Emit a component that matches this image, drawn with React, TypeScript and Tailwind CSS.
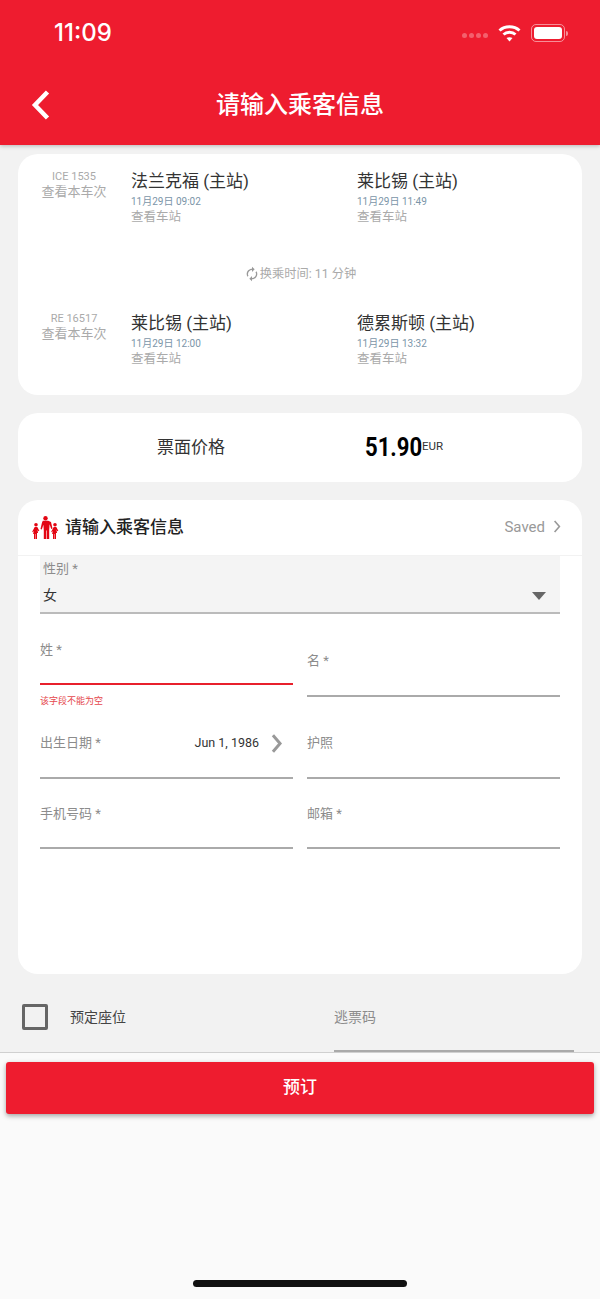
import { MdAutorenew } from 'react-icons/md';

const legs = [
  {
    train: 'ICE 1535',
    from: '法兰克福 (主站)',
    fromTime: '11月29日 09:02',
    to: '莱比锡 (主站)',
    toTime: '11月29日 11:49',
  },
  {
    train: 'RE 16517',
    from: '莱比锡 (主站)',
    fromTime: '11月29日 12:00',
    to: '德累斯顿 (主站)',
    toTime: '11月29日 13:32',
  },
];

function Stop({ name, time }: { name: string; time: string }) {
  return (
    <div className="flex flex-col">
      <span className="text-[17px] leading-[27px] text-[#333]">{name}</span>
      <span className="text-[10px] leading-[14px] text-[#7b95a8]">{time}</span>
      <span className="text-[12.5px] leading-[16px] text-[#aaa]">查看车站</span>
    </div>
  );
}

function Leg({ train, from, fromTime, to, toTime }: (typeof legs)[number]) {
  return (
    <div className="flex h-[56px]">
      <div className="w-[112px] pt-[2px] text-center flex flex-col shrink-0">
        <span className="text-[11px] leading-[14px] text-[#aaa]">{train}</span>
        <span className="text-[13px] leading-[16px] text-[#aaa]">查看本车次</span>
      </div>
      <div className="w-[226px] shrink-0 ml-[1px]">
        <Stop name={from} time={fromTime} />
      </div>
      <Stop name={to} time={toTime} />
    </div>
  );
}

function FamilyIcon() {
  const kid = 'M2.700 11h2.600l2 3.800-.9.5-1-1.500.7 3.200H5V23H3.700v-5h-.4v5H2v-5h-.9l.7-3.200-1 1.500-.6-.5z';
  return (
    <svg width="27" height="23" viewBox="0 0 27 23" fill="#e30613">
      <circle cx="13.500" cy="2.200" r="2.200" />
      <path d="M10.800 4.800h5.400l2.800 1.200 1.500 6.600-1.300.4-1.600-4.700-.4 5.700V23h-2.400v-8.500h-.6V23h-2.400v-8.500l-.4-5.700-1.600 4.700-1.300-.4 1.500-6.600z" />
      <circle cx="4" cy="8.800" r="1.800" />
      <path d={kid} />
      <circle cx="23" cy="8.800" r="1.800" />
      <path d={kid} transform="translate(19 0)" />
    </svg>
  );
}

function Chevron({ className, width, height, strokeWidth }: { className: string; width: number; height: number; strokeWidth: number }) {
  return (
    <svg width={width} height={height} viewBox="0 0 10 16" className={className} fill="none" stroke="currentColor" strokeWidth={strokeWidth}>
      <path d="M2 1l6 7-6 7" />
    </svg>
  );
}

function FieldLabel({ text }: { text: string }) {
  return <span className="block text-[13px] leading-[20px] text-[#8c8c8c]">{text}</span>;
}

export default function App() {
  return (
    <div className="w-[600px] h-[1299px] overflow-hidden flex flex-col bg-[#fafafa] font-['Roboto','Noto_Sans_CJK_SC',sans-serif]">
      <header className="relative z-10 h-[145px] shrink-0 bg-[#ee1c2f] text-white shadow-[0_1px_4px_rgba(0,0,0,0.25)] flex flex-col">
        <div className="flex items-center justify-between pl-[54px] pr-[32px] pt-[17px] h-[49px] shrink-0">
          <span className="font-['Inter'] text-[24px] leading-[30px] font-medium">11:09</span>
          <div className="flex items-center">
            <div className="flex gap-[2px] mr-[10px] mt-[5px]">
              {[0, 1, 2, 3].map((i) => (
                <span key={i} className="w-[5px] h-[5px] rounded-full bg-white/30" />
              ))}
            </div>
            <svg width="23" height="18" viewBox="0 0 23 18" fill="none" stroke="white" strokeWidth="3">
              <path d="M1.500 6.500c5.500-5 14.500-5 20 0" />
              <path d="M5.500 10.500c3.300-3 8.700-3 12 0" />
              <path d="M11.500 17.500l-3-3.400c1.700-1.300 4.300-1.300 6 0z" fill="white" stroke="none" />
            </svg>
            <div className="ml-[10px] flex items-center">
              <div className="w-[34px] h-[18px] rounded-[5px] border border-white/50 p-[2px]">
                <div className="w-full h-full rounded-[3px] bg-white" />
              </div>
              <span className="w-[2px] h-[5px] ml-[1px] rounded-r-full bg-white/50" />
            </div>
          </div>
        </div>
        <div className="relative flex-1 flex justify-center pt-[40px]">
          <svg width="20" height="30" viewBox="0 0 20 30" className="absolute left-[31px] top-[41px]" fill="none" stroke="white" strokeWidth="4.500">
            <path d="M16.500 2L4 15l12.500 13" />
          </svg>
          <h1 className="text-[24px] leading-[32px] font-medium">请输入乘客信息</h1>
        </div>
      </header>

      <main className="h-[908px] shrink-0 bg-[#f2f2f2] px-[18px] pt-[9px] flex flex-col border-b border-[#d0d0d0]">
        <section className="h-[241px] rounded-[20px] bg-white pt-[14px] shrink-0">
          <Leg {...legs[0]} />
          <div className="h-[86px] flex items-center justify-center pt-[14px] text-[12.25px] text-[#aaa]">
            <MdAutorenew size={16} className="text-[#999]" />
            <span>换乘时间: 11 分钟</span>
          </div>
          <Leg {...legs[1]} />
        </section>

        <section className="mt-[18px] h-[69px] rounded-[20px] bg-white flex items-center shrink-0">
          <span className="w-[346px] text-center text-[17px] text-[#333]">票面价格</span>
          <span className="w-[57px] ml-[1px] mb-[2px] text-[26px] leading-[32px] font-bold text-black whitespace-nowrap origin-left scale-x-[0.85]">51.90</span>
          <span className="text-[11.5px] text-[#333] mb-[2px]">EUR</span>
        </section>

        <section className="mt-[18px] h-[474px] rounded-[20px] bg-white shrink-0 overflow-hidden">
          <div className="h-[56px] border-b border-[#f2f2f2] flex items-center pl-[14px] pr-[21px]">
            <FamilyIcon />
            <span className="ml-[6px] text-[17px] font-medium text-[#222]">请输入乘客信息</span>
            <span className="ml-auto text-[15px] text-[#999]">Saved</span>
            <Chevron className="ml-[8px] text-[#999] mb-[2px]" width={8} height={13} strokeWidth={2} />
          </div>

          <div className="px-[22px]">
            <div className="relative h-[58px] bg-[#f4f4f4] border-b-2 border-[#bbb] px-[3px] pt-[3px] flex flex-col">
              <FieldLabel text="性别 *" />
              <span className="mt-[6px] text-[14px] leading-[20px] text-[#333]">女</span>
              <span className="absolute right-[14px] top-[36px] border-x-[7px] border-t-[8px] border-x-transparent border-t-[#666]" />
            </div>

            <div className="grid grid-cols-2 gap-x-[14px]">
              <div className="pt-[26px]">
                <div className="h-[45px] border-b-2 border-[#e8202c]">
                  <FieldLabel text="姓 *" />
                </div>
                <p className="mt-[10px] text-[9px] leading-[12px] text-[#e5484d]">该字段不能为空</p>
              </div>
              <div className="pt-[37px]">
                <div className="h-[46px] border-b-2 border-[#aaa]">
                  <FieldLabel text="名 *" />
                </div>
              </div>

              <div className="pt-[26px]">
                <div className="h-[46px] border-b-2 border-[#aaa] flex justify-between">
                  <FieldLabel text="出生日期 *" />
                  <div className="flex items-start pr-[10px]">
                    <span className="text-[12.5px] leading-[20px] text-[#333]">Jun 1, 1986</span>
                    <Chevron className="ml-[11px] mt-[1px] text-[#999]" width={13} height={19} strokeWidth={2.500} />
                  </div>
                </div>
              </div>
              <div className="pt-[26px]">
                <div className="h-[46px] border-b-2 border-[#aaa]">
                  <FieldLabel text="护照" />
                </div>
              </div>

              <div className="pt-[25px]">
                <div className="h-[45px] border-b-2 border-[#aaa]">
                  <FieldLabel text="手机号码 *" />
                </div>
              </div>
              <div className="pt-[25px]">
                <div className="h-[45px] border-b-2 border-[#aaa]">
                  <FieldLabel text="邮箱 *" />
                </div>
              </div>
            </div>
          </div>
        </section>

        <div className="mt-[30px] pl-[4px] flex">
          <div className="w-[26px] h-[26px] border-[3px] border-[#666] rounded-[2px] shrink-0" />
          <span className="ml-[22px] text-[14px] leading-[26px] text-[#444] w-[264px] shrink-0">预定座位</span>
          <div className="w-[240px] h-[48px] border-b-2 border-[#aaa] text-[14px] leading-[26px] text-[#8c8c8c]">逃票码</div>
        </div>
      </main>

      <div className="flex-1 px-[6px] pt-[9px] flex flex-col">
        <button className="h-[52px] rounded-[3px] bg-[#ee1c2f] text-white text-[17px] font-medium shadow-[0_2px_5px_rgba(0,0,0,0.35)]">预订</button>
        <div className="mt-auto mb-[12px] mx-auto w-[214px] h-[7px] rounded-full bg-[#111]" />
      </div>
    </div>
  );
}
